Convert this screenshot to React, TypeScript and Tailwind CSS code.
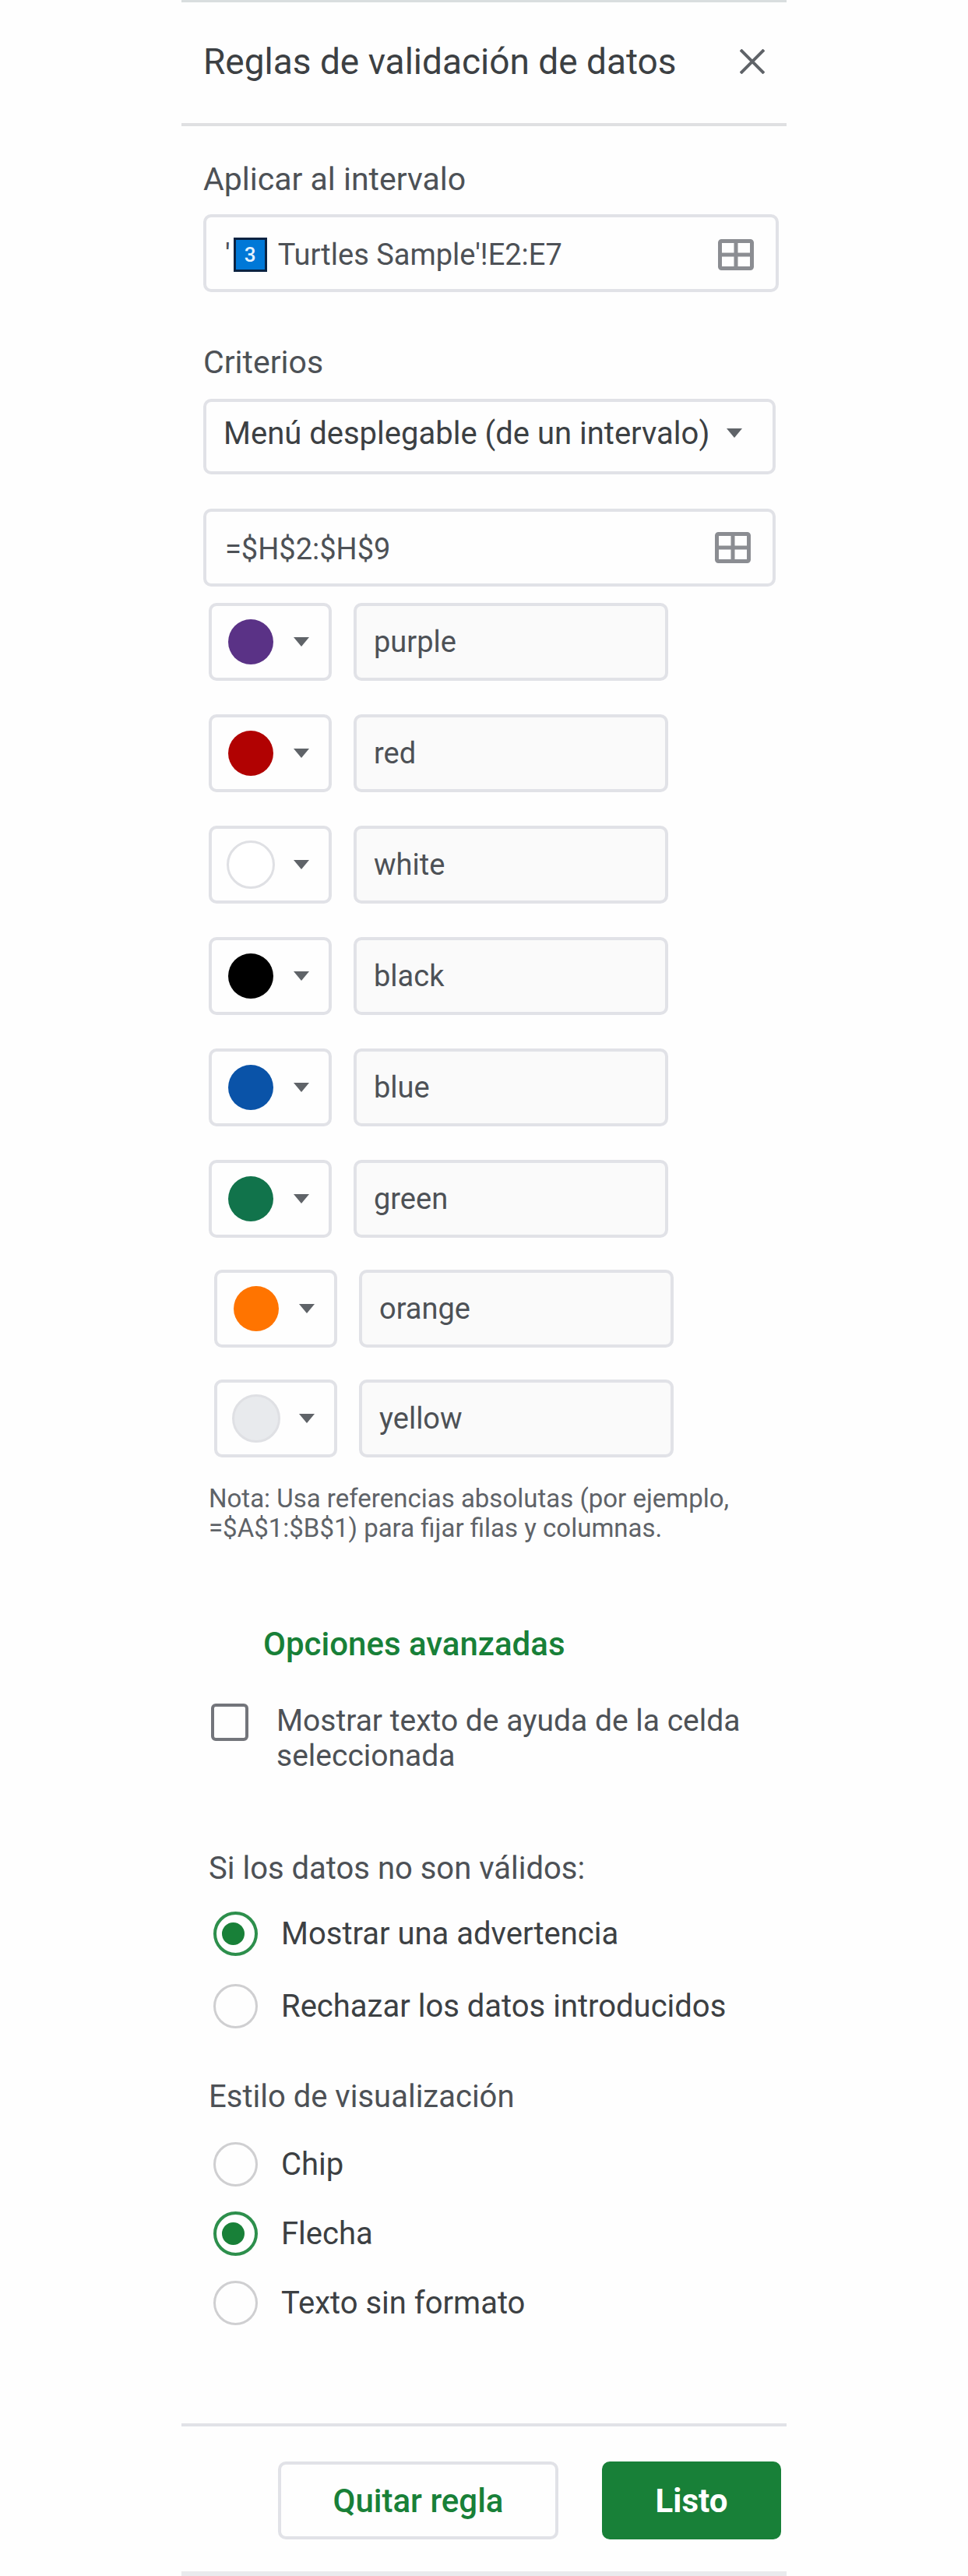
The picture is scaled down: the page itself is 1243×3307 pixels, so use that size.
import { useState } from 'react'

const LEADING_ROWS = [
  { name: 'purple', color: '#5a3286' },
  { name: 'red', color: '#b10202' },
  { name: 'white', color: '#ffffff' },
  { name: 'black', color: '#000000' },
  { name: 'blue', color: '#0a53a8' },
  { name: 'green', color: '#11734b' },
]

const TRAILING_ROWS = [
  { name: 'orange', color: '#ff7400' },
  { name: 'yellow', color: '#e8eaed' },
]

const INVALID_OPTIONS = ['Mostrar una advertencia', 'Rechazar los datos introducidos']
const STYLE_OPTIONS = ['Chip', 'Flecha', 'Texto sin formato']

type Row = { name: string; color: string }

function GridIcon() {
  return (
    <svg
      viewBox="0 0 46 40"
      className="h-10 w-[46px]"
      fill="none"
      stroke="#8b8d92"
      strokeWidth="5"
    >
      <rect x="2.5" y="2.5" width="41" height="35" rx="2" />
      <path d="M23 2v36M2 20h42" />
    </svg>
  )
}

function Caret() {
  return (
    <svg viewBox="0 0 20 12" className="h-3 w-5" fill="#5f6368">
      <path d="M0 0h20L10 12z" />
    </svg>
  )
}

function ColorRow({ row }: { row: Row }) {
  // Light swatches need a visible outline against the white box.
  const light = row.color === '#ffffff' || row.color === '#e8eaed'
  return (
    <div className="flex gap-7">
      <button
        type="button"
        aria-label={`Color de ${row.name}`}
        className="flex h-[100px] w-[158px] items-center gap-6 rounded-[10px] border-4 border-[#e1e2e7] pl-[19px]"
      >
        <span
          className={
            light
              ? 'size-[62px] shrink-0 rounded-full border-3 border-[#dfe0e4]'
              : 'mx-[2px] size-[58px] shrink-0 rounded-full'
          }
          style={{ backgroundColor: row.color }}
        />
        <Caret />
      </button>
      <input
        type="text"
        aria-label={`Valor ${row.name}`}
        value={row.name}
        readOnly
        className="h-[100px] w-[404px] min-w-0 rounded-[10px] border-4 border-[#e1e2e7] bg-[#fafafa] px-[22px] text-[38px] text-[#4d5156]"
      />
    </div>
  )
}

function RadioOption({
  group,
  label,
  checked,
  onSelect,
}: {
  group: string
  label: string
  checked: boolean
  onSelect: () => void
}) {
  return (
    <label className="flex items-center gap-[30px] pl-[6px] text-[40px] leading-[57px] text-[#3c4043]">
      <input
        type="radio"
        name={group}
        checked={checked}
        onChange={onSelect}
        className="grid size-[57px] shrink-0 appearance-none place-items-center rounded-full border-3 border-[#cfcfd1] pr-[6px] before:size-[29px] before:rounded-full checked:border-4 checked:border-[#2d8f4c] checked:before:bg-[#188038]"
      />
      {label}
    </label>
  )
}

export default function App() {
  const [range, setRange] = useState("Turtles Sample'!E2:E7")
  const [source, setSource] = useState('=$H$2:$H$9')
  const [showHelp, setShowHelp] = useState(false)
  const [invalid, setInvalid] = useState(INVALID_OPTIONS[0])
  const [display, setDisplay] = useState(STYLE_OPTIONS[1])

  return (
    <div className="min-h-screen bg-[#fefefe] font-[Roboto,sans-serif]">
      <main className="mx-auto flex w-full max-w-[777px] flex-col border-t-3 border-b-6 border-t-[#d9dedf] border-b-[#e9eaed]">
        <header className="flex h-[159px] items-center justify-between border-b-4 border-[#dfe0e2] pr-7 pb-1 pl-7">
          <h1 className="text-[46px] leading-[60px] text-[#3c4043]">
            Reglas de validación de datos
          </h1>
          <button type="button" aria-label="Cerrar">
            <svg viewBox="0 0 32 32" className="size-8" stroke="#5f6368" strokeWidth="4">
              <path d="M1 1l30 30M31 1L1 31" />
            </svg>
          </button>
        </header>

        <div className="flex flex-col pr-[10px] pl-7">
          <label htmlFor="range" className="mt-[45px] text-[41px] leading-[46px] text-[#4d5156]">
            Aplicar al intervalo
          </label>
          <div className="mt-[22px] flex h-[100px] items-center rounded-[10px] border-4 border-[#e1e2e7] pt-1 pr-7 pl-6 text-[38px] text-[#4d5156]">
            <span>'</span>
            <span className="ml-1 flex h-[44px] w-[43px] items-center justify-center border-3 border-[#0b2342] bg-[#0078d7] text-[26px] font-medium text-[#e6f3ff]">
              3
            </span>
            <input
              id="range"
              type="text"
              value={range}
              onChange={(e) => setRange(e.target.value)}
              className="ml-[14px] min-w-0 flex-1"
            />
            <button type="button" aria-label="Seleccionar intervalo">
              <GridIcon />
            </button>
          </div>

          <label htmlFor="criteria" className="mt-[67px] text-[41px] leading-[46px] text-[#4d5156]">
            Criterios
          </label>
          <div className="relative mt-6 mr-1">
            <select
              id="criteria"
              className="h-[97px] w-full appearance-none rounded-[10px] border-4 border-[#e1e2e7] pr-20 pb-2 pl-[22px] text-[40px] text-[#3c4043]"
            >
              <option>Menú desplegable (de un intervalo)</option>
            </select>
            <span className="pointer-events-none absolute top-[38px] right-[43px]">
              <Caret />
            </span>
          </div>
          <div className="mt-11 mr-1 flex h-[100px] items-center rounded-[10px] border-4 border-[#e1e2e7] pr-7 pl-6 text-[38px] text-[#4d5156]">
            <input
              type="text"
              aria-label="Intervalo de criterios"
              value={source}
              onChange={(e) => setSource(e.target.value)}
              className="min-w-0 flex-1 pt-1"
            />
            <button type="button" aria-label="Seleccionar intervalo de criterios">
              <GridIcon />
            </button>
          </div>

          <div className="mt-[21px] flex flex-col gap-[43px] pl-[7px]">
            {LEADING_ROWS.map((row) => (
              <ColorRow key={row.name} row={row} />
            ))}
          </div>
          <div className="mt-[41px] flex flex-col gap-[41px] pl-[14px]">
            {TRAILING_ROWS.map((row) => (
              <ColorRow key={row.name} row={row} />
            ))}
          </div>
          <p className="mt-[34px] pl-[7px] text-[33px] leading-[38px] text-[#5f6368]">
            Nota: Usa referencias absolutas (por ejemplo,
            <br />
            =$A$1:$B$1) para fijar filas y columnas.
          </p>
        </div>

        <div className="flex flex-col pl-[35px]">
          <button
            type="button"
            className="mt-[105px] ml-[70px] self-start text-[42px] leading-[50px] font-medium text-[#188038]"
          >
            Opciones avanzadas
          </button>
          <label className="mt-[51px] flex items-start gap-9 pl-[3px] text-[39px] leading-[45px] text-[#4d5156]">
            <input
              type="checkbox"
              checked={showHelp}
              onChange={(e) => setShowHelp(e.target.checked)}
              className="size-12 shrink-0 appearance-none rounded-[6px] border-4 border-[#73757b] checked:bg-[#188038]"
            />
            <span>
              Mostrar texto de ayuda de la celda
              <br />
              seleccionada
            </span>
          </label>

          <fieldset className="mt-[99px]">
            <legend className="text-[40px] leading-[46px] text-[#4d5156]">
              Si los datos no son válidos:
            </legend>
            <div className="mt-8 flex flex-col gap-9">
              {INVALID_OPTIONS.map((label) => (
                <RadioOption
                  key={label}
                  group="invalid"
                  label={label}
                  checked={invalid === label}
                  onSelect={() => setInvalid(label)}
                />
              ))}
            </div>
          </fieldset>

          <fieldset className="mt-[65px]">
            <legend className="text-[40px] leading-[46px] text-[#4d5156]">
              Estilo de visualización
            </legend>
            <div className="mt-[35px] flex flex-col gap-8">
              {STYLE_OPTIONS.map((label) => (
                <RadioOption
                  key={label}
                  group="display"
                  label={label}
                  checked={display === label}
                  onSelect={() => setDisplay(label)}
                />
              ))}
            </div>
          </fieldset>
        </div>

        <footer className="mt-[126px] flex justify-end gap-14 border-t-4 border-[#e1e2e7] pt-[45px] pr-[7px] pb-[41px] text-[42px]">
          <button
            type="button"
            className="h-[100px] w-[360px] rounded-[10px] border-4 border-[#e1e2e7] font-medium text-[#188038]"
          >
            Quitar regla
          </button>
          <button
            type="button"
            className="h-[100px] w-[230px] rounded-[10px] bg-[#188038] font-bold text-white"
          >
            Listo
          </button>
        </footer>
      </main>
    </div>
  )
}
